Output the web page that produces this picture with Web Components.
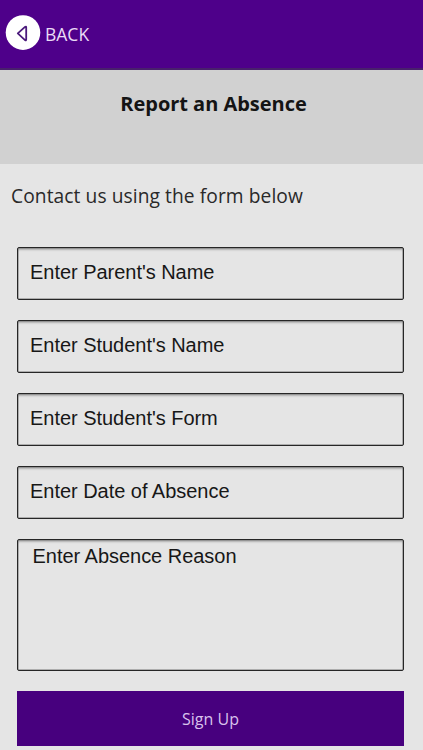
<!DOCTYPE html>
<html lang="en">
<head>
<meta charset="utf-8">
<meta name="viewport" content="width=device-width, initial-scale=1">
<title>Report an Absence</title>
<style>
  html, body {
    margin: 0;
    height: 100%;
    overflow: hidden;
    background: #e5e5e5;
  }
</style>
</head>
<body>
<absence-page></absence-page>

<script>
class BackBar extends HTMLElement {
  constructor() {
    super();
    this.attachShadow({ mode: 'open' });
  }

  static get styles() {
    return /* css */ `
      :host {
        display: flex;
        align-items: flex-start;
        gap: 4px;
        box-sizing: border-box;
        height: 70px;
        padding: 15px 0 0 5px;
        background: #4e008a;
        border-bottom: 2px solid #48206c;
        color: #eadcf6;
      }

      svg {
        display: block;
        width: 36px;
        height: 36px;
      }

      .label {
        font-size: 17.5px;
        line-height: 24px;
        margin-top: 7px;
      }
    `;
  }

  connectedCallback() {
    this.shadowRoot.innerHTML = /* html */ `
    <style>${BackBar.styles}</style>
    <svg viewBox="0 0 36 36" aria-hidden="true">
      <circle cx="18" cy="17.6" r="17.3" fill="#fff"/>
      <path d="M20 11.9 L12.8 18.4 L20 25.1 Q21.2 26 21.2 24.6 L21.2 12.3 Q21.2 11 20 11.9 Z" fill="none" stroke="#4b1a7c" stroke-width="1.8" stroke-linejoin="round"/>
    </svg>
    <span class="label"><slot></slot></span>`;
  }
}

class PageHeading extends HTMLElement {
  constructor() {
    super();
    this.attachShadow({ mode: 'open' });
  }

  static get styles() {
    return /* css */ `
      :host {
        display: block;
        box-sizing: border-box;
        height: 94px;
        padding: 20px 0 0 4px;
        background: #d1d1d1;
        text-align: center;
      }

      h1 {
        margin: 0;
        font-size: 20px;
        line-height: 28px;
        font-weight: 700;
        letter-spacing: -0.03px;
        color: #141414;
      }
    `;
  }

  connectedCallback() {
    this.shadowRoot.innerHTML = /* html */ `
    <style>${PageHeading.styles}</style>
    <h1><slot></slot></h1>`;
  }
}

class FormField extends HTMLElement {
  constructor() {
    super();
    this.attachShadow({ mode: 'open' });
  }

  static get styles() {
    return /* css */ `
      :host {
        display: block;
        box-sizing: border-box;
        height: 53px;
        padding: 12px 11px 0 12px;
        border: 1px solid #262626;
        border-radius: 2px;
        box-shadow: inset 0 0 0 0.5px #777, inset 0 3px 2px -1px #b0b0b0;
        font-family: "Liberation Sans", Arial, sans-serif;
        font-size: 20px;
        line-height: 24px;
        letter-spacing: -0.03px;
        color: #171717;
      }

      :host([multiline]) {
        height: 132px;
        padding: 4px 14px 0 14.5px;
      }
    `;
  }

  connectedCallback() {
    this.shadowRoot.innerHTML = /* html */ `
    <style>${FormField.styles}</style>
    <span><slot></slot></span>`;
  }
}

class SubmitButton extends HTMLElement {
  constructor() {
    super();
    this.attachShadow({ mode: 'open' });
  }

  static get styles() {
    return /* css */ `
      :host {
        display: block;
      }

      button {
        display: block;
        box-sizing: border-box;
        width: 100%;
        height: 55px;
        padding: 1px 0 0;
        border: 0;
        background: #47007e;
        color: #d9c2ec;
        font-family: inherit;
        font-size: 16px;
        line-height: 24px;
      }
    `;
  }

  connectedCallback() {
    this.shadowRoot.innerHTML = /* html */ `
    <style>${SubmitButton.styles}</style>
    <button type="button"><slot></slot></button>`;
  }
}

class AbsencePage extends HTMLElement {
  constructor() {
    super();
    this.attachShadow({ mode: 'open' });
  }

  static get styles() {
    return /* css */ `
      :host {
        display: block;
        box-sizing: border-box;
        height: 750px;
        overflow: hidden;
        background: #e5e5e5;
        font-family: "Open Sans", sans-serif;
      }

      .intro {
        margin: 0;
        padding: 18px 0 0 11px;
        font-size: 19.2px;
        line-height: 28px;
        letter-spacing: 0.08px;
        color: #292929;
      }

      .form {
        display: flex;
        flex-direction: column;
        gap: 20px;
        padding: 37px 19px 0 17px;
      }
    `;
  }

  connectedCallback() {
    this.shadowRoot.innerHTML = /* html */ `
    <style>${AbsencePage.styles}</style>
    <back-bar>BACK</back-bar>
    <page-heading>Report an Absence</page-heading>
    <p class="intro">Contact us using the form below</p>
    <div class="form">
      <form-field>Enter Parent's Name</form-field>
      <form-field>Enter Student's Name</form-field>
      <form-field>Enter Student's Form</form-field>
      <form-field>Enter Date of Absence</form-field>
      <form-field multiline>Enter Absence Reason</form-field>
      <submit-button>Sign Up</submit-button>
    </div>`;
  }
}

customElements.define('back-bar', BackBar);
customElements.define('page-heading', PageHeading);
customElements.define('form-field', FormField);
customElements.define('submit-button', SubmitButton);
customElements.define('absence-page', AbsencePage);
</script>
</body>
</html>
